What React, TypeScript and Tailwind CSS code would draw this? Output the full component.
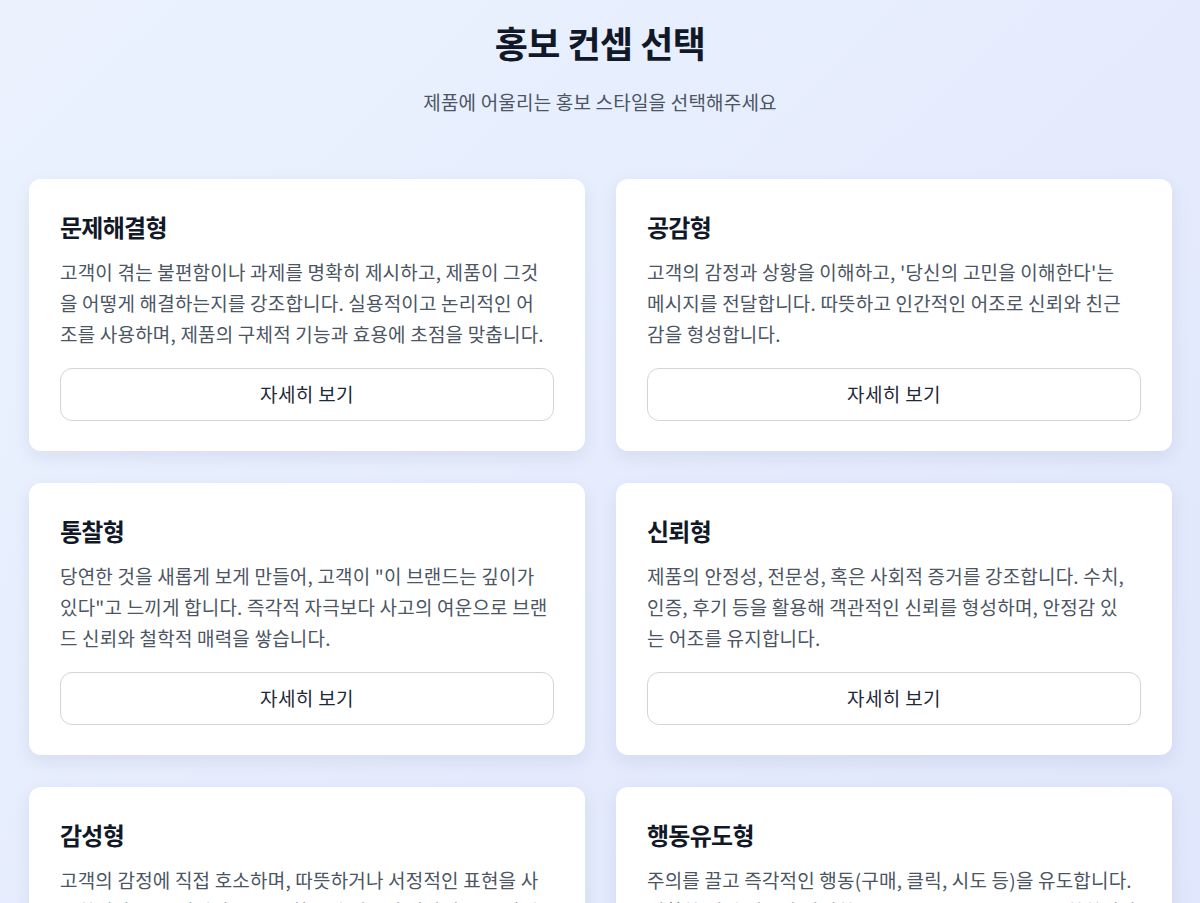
import React from "react";

type Concept = { title: string; lines: string[] };

const concepts: Concept[] = [
  {
    title: "문제해결형",
    lines: [
      "고객이 겪는 불편함이나 과제를 명확히 제시하고, 제품이 그것",
      "을 어떻게 해결하는지를 강조합니다. 실용적이고 논리적인 어",
      "조를 사용하며, 제품의 구체적 기능과 효용에 초점을 맞춥니다.",
    ],
  },
  {
    title: "공감형",
    lines: [
      "고객의 감정과 상황을 이해하고, '당신의 고민을 이해한다'는",
      "메시지를 전달합니다. 따뜻하고 인간적인 어조로 신뢰와 친근",
      "감을 형성합니다.",
    ],
  },
  {
    title: "통찰형",
    lines: [
      "당연한 것을 새롭게 보게 만들어, 고객이 \"이 브랜드는 깊이가",
      "있다\"고 느끼게 합니다. 즉각적 자극보다 사고의 여운으로 브랜",
      "드 신뢰와 철학적 매력을 쌓습니다.",
    ],
  },
  {
    title: "신뢰형",
    lines: [
      "제품의 안정성, 전문성, 혹은 사회적 증거를 강조합니다. 수치,",
      "인증, 후기 등을 활용해 객관적인 신뢰를 형성하며, 안정감 있",
      "는 어조를 유지합니다.",
    ],
  },
  {
    title: "감성형",
    lines: [
      "고객의 감정에 직접 호소하며, 따뜻하거나 서정적인 표현을 사",
      "용합니다. 스토리텔링 요소를 활용해 제품이 일상에 주는 감정",
      "적 가치와 분위기를 전달합니다.",
    ],
  },
  {
    title: "행동유도형",
    lines: [
      "주의를 끌고 즉각적인 행동(구매, 클릭, 시도 등)을 유도합니다.",
      "명확한 혜택 제시와 간결한 CTA(Call to Action)를 포함합니다.",
      "짧고 힘 있는 문장으로 구매 욕구를 자극합니다.",
    ],
  },
];

function Card({ c }: { c: Concept }) {
  return (
    <div className="bg-white rounded-xl shadow-[0_6px_18px_rgba(30,41,80,0.08)] px-[31px] pt-8 pb-[30px] flex flex-col">
      <h2 className="text-[24px] leading-[32px] font-bold tracking-[-0.03em] text-[#111827]">
        {c.title}
      </h2>
      <p className="mt-[13px] text-[19px] leading-[31px] tracking-[0.01em] text-[#4b5563]">
        {c.lines.map((l, i) => (
          <span key={i} className="block whitespace-nowrap">
            {l}
          </span>
        ))}
      </p>
      <button className="mt-[19px] h-[53px] w-full rounded-xl border border-[#d1d5db] bg-white text-[19px] tracking-[0.02em] text-[#1f2937]">
        자세히 보기
      </button>
    </div>
  );
}

export default function App() {
  return (
    <div
      className="min-h-screen bg-gradient-to-br from-[#ebf2fe] to-[#dfe5fb] pb-16"
      style={{ fontFamily: '"Noto Sans CJK KR", "Noto Sans", sans-serif' }}
    >
      <header className="pt-[22px] flex flex-col items-center">
        <h1 className="text-[36px] leading-[40px] font-bold tracking-[-0.015em] text-[#111827]">
          홍보 컨셉 선택
        </h1>
        <p className="mt-[26px] text-[19px] leading-[28px] tracking-[0.01em] text-[#4b5563]">
          제품에 어울리는 홍보 스타일을 선택해주세요
        </p>
      </header>
      <main className="mt-[63px] px-[29px] pr-[28px] grid grid-cols-2 gap-x-[31px] gap-y-8">
        {concepts.map((c) => (
          <Card key={c.title} c={c} />
        ))}
      </main>
    </div>
  );
}
